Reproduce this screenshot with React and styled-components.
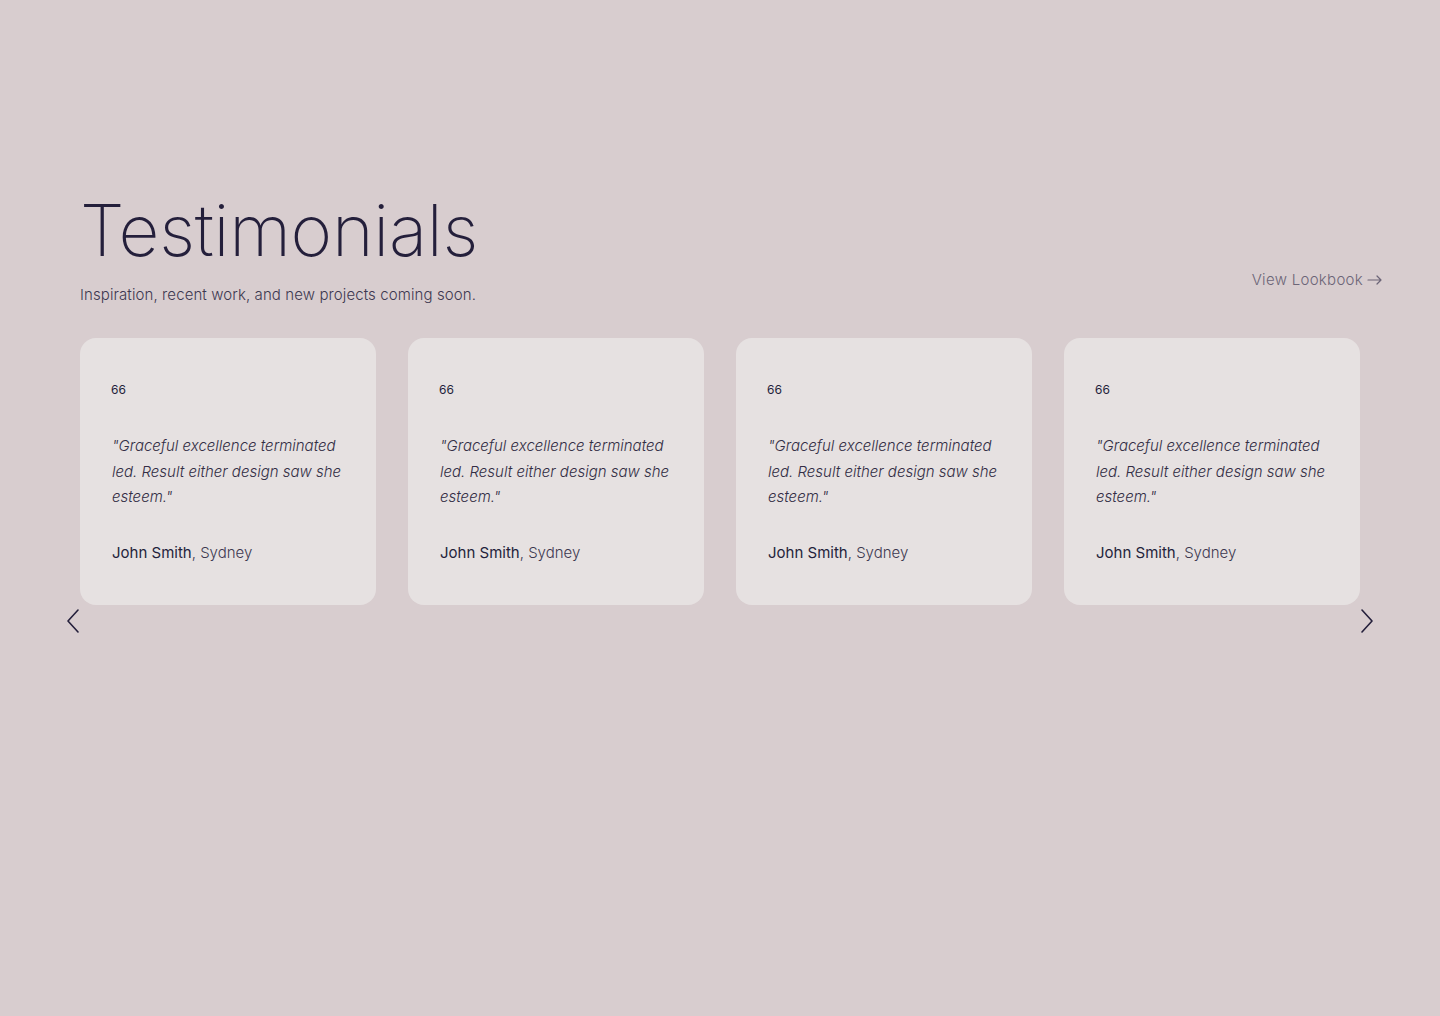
import React from 'react';
import styled, { createGlobalStyle } from 'styled-components';

const GlobalStyle = createGlobalStyle`
  html, body {
    margin: 0;
    padding: 0;
    background: #d8cdcf;
    font-family: 'Inter', 'Liberation Sans', sans-serif;
    color: #241f3b;
  }
`;

const Page = styled.main`
  min-height: 1016px;
  box-sizing: border-box;
  padding: 186px 57px 0 80px;
`;

const Header = styled.div`
  display: flex;
  align-items: flex-end;
  justify-content: space-between;
`;

const Title = styled.h1`
  margin: 0;
  font-size: 71px;
  font-weight: 200;
  line-height: 88px;
  letter-spacing: -0.3px;
  color: #241f3b;
`;

const Subtitle = styled.p`
  margin: 10px 0 0 0;
  font-size: 15px;
  font-weight: 300;
  line-height: 22px;
  letter-spacing: 0.1px;
  color: #3d3850;
`;

const Lookbook = styled.a`
  display: flex;
  align-items: center;
  gap: 4px;
  font-size: 15px;
  font-weight: 300;
  letter-spacing: 0.3px;
  color: #6c6577;
  text-decoration: none;
  margin-bottom: 17px;
`;

const Carousel = styled.div`
  position: relative;
  margin-top: 32px;
  padding-right: 23px;
`;

const Track = styled.div`
  display: grid;
  grid-template-columns: repeat(4, 296px);
  gap: 32px;
`;

const Card = styled.article`
  background: #e6e1e1;
  border-radius: 16px;
  height: 267px;
  box-sizing: border-box;
  padding: 44px 32px 0 32px;
`;

const QuoteMark = styled.div`
  font-size: 12px;
  line-height: 16px;
  color: #241f3b;
  margin-left: -1px;
`;

const Quote = styled.p`
  margin: 35px 0 0 0;
  font-style: italic;
  font-size: 15px;
  font-weight: 300;
  line-height: 25.5px;
  letter-spacing: 0;
  color: #332e45;
`;

const Author = styled.div`
  margin-top: 32px;
  font-size: 15px;
  font-weight: 300;
  line-height: 22px;
  letter-spacing: 0;
  color: #3d3850;
`;

const Name = styled.span`
  font-weight: 400;
  color: #241f3b;
`;

const Arrow = styled.button`
  position: absolute;
  top: 268px;
  ${(p) => (p.$side === 'left' ? 'left: -16px;' : 'right: 7px;')}
  width: 18px;
  height: 30px;
  padding: 0;
  border: 0;
  background: none;
  cursor: pointer;
  display: flex;
  align-items: center;
  justify-content: center;
`;

const Chevron = ({ dir }) => (
  <svg width="14" height="24" viewBox="0 0 14 24" fill="none">
    <path
      d={dir === 'left' ? 'M12 1 L2 12 L12 23' : 'M2 1 L12 12 L2 23'}
      stroke="#241f3b"
      strokeWidth="1.6"
      strokeLinecap="round"
      strokeLinejoin="round"
    />
  </svg>
);

const items = [1, 2, 3, 4].map((id) => ({
  id,
  quote: '"Graceful excellence terminated led. Result either design saw she esteem."',
  name: 'John Smith',
  city: 'Sydney',
}));

const App = () => (
  <>
    <GlobalStyle />
    <Page>
      <Header>
        <div>
          <Title>Testimonials</Title>
          <Subtitle>Inspiration, recent work, and new projects coming soon.</Subtitle>
        </div>
        <Lookbook href="#">
          View Lookbook
          <svg width="16" height="10" viewBox="0 0 16 10" fill="none">
            <path d="M1 5 H14 M10 1 L14 5 L10 9" stroke="#6c6577" strokeWidth="1.2" strokeLinecap="round" strokeLinejoin="round" />
          </svg>
        </Lookbook>
      </Header>
      <Carousel>
        <Track>
          {items.map((it) => (
            <Card key={it.id}>
              <QuoteMark>66</QuoteMark>
              <Quote>{it.quote}</Quote>
              <Author>
                <Name>{it.name}</Name>, {it.city}
              </Author>
            </Card>
          ))}
        </Track>
        <Arrow $side="left" aria-label="Previous"><Chevron dir="left" /></Arrow>
        <Arrow $side="right" aria-label="Next"><Chevron dir="right" /></Arrow>
      </Carousel>
    </Page>
  </>
);

export default App;
